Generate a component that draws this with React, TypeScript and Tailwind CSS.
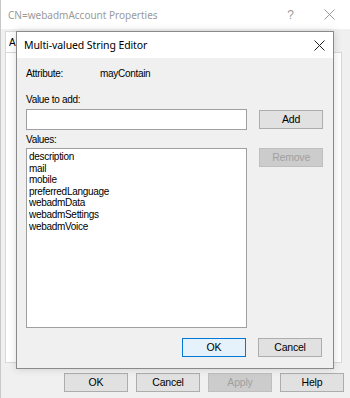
import React from "react";

const values = [
  "description",
  "mail",
  "mobile",
  "preferredLanguage",
  "webadmData",
  "webadmSettings",
  "webadmVoice",
];

const CloseGlyph = ({ size = 11, color = "#333" }: { size?: number; color?: string }) => (
  <svg width={size} height={size} viewBox="0 0 11 11">
    <path d="M0.5 0.5 L10.5 10.5 M10.5 0.5 L0.5 10.5" stroke={color} strokeWidth="1" fill="none" />
  </svg>
);

const WinButton = ({
  label,
  variant = "normal",
}: {
  label: string;
  variant?: "normal" | "default" | "disabled";
}) => {
  const styles =
    variant === "default"
      ? "border-[#0078d7] bg-[#e5f1fb] text-black"
      : variant === "disabled"
      ? "border-[#bfbfbf] bg-[#cccccc] text-[#a0a0a0]"
      : "border-[#adadad] bg-[#e1e1e1] text-black";
  return (
    <div
      className={`flex h-[19px] w-[64px] items-center justify-center border text-[10.5px] leading-[13px] tracking-[-0.2px] ${styles}`}
    >
      {label}
    </div>
  );
};

export default function App() {
  return (
    <div
      className="relative h-[398px] w-[350px] overflow-hidden border-l border-[#c8c8c8] bg-[#f0f0f0] text-black"
      style={{ fontFamily: '"Liberation Sans", Arial, sans-serif' }}
    >
      {/* Parent window */}
      <div className="flex h-[29px] items-center bg-white pl-[7px] pr-[15px]">
        <span
          className="text-[10px] leading-[14px] text-[#9a9a9a]"
          style={{ fontFamily: '"Noto Sans", sans-serif' }}
        >
          CN=webadmAccount Properties
        </span>
        <span className="ml-auto mr-[30px] text-[12px] leading-[14px] text-[#9a9a9a]">?</span>
        <CloseGlyph size={11} color="#9a9a9a" />
      </div>
      <div className="flex h-[23px] items-end pl-[4px]">
        <div className="flex h-[21px] w-[24px] items-center border border-b-0 border-[#d9d9d9] bg-white pl-[3px] text-[10px] leading-[13px]">
          A
        </div>
      </div>
      <div className="ml-[4px] mr-[8px] h-[311px] border border-[#d9d9d9] bg-white" />
      <div className="mt-[10px] flex justify-end gap-[8px] pr-[6px]">
        <WinButton label="OK" />
        <WinButton label="Cancel" />
        <WinButton label="Apply" variant="disabled" />
        <WinButton label="Help" />
      </div>

      {/* Multi-valued String Editor dialog */}
      <div className="absolute left-[15px] top-[31px] flex h-[338px] w-[318px] flex-col border border-[#8a8a8a] bg-[#f0f0f0] shadow-[0_0_8px_rgba(0,0,0,0.15)]">
        <div className="flex h-[26px] shrink-0 items-center bg-white pl-[7px] pr-[8px]">
          <span
            className="text-[10.5px] leading-[14px] tracking-[-0.1px] text-black"
            style={{ fontFamily: '"Noto Sans", sans-serif' }}
          >
            Multi-valued String Editor
          </span>
          <span className="ml-auto">
            <CloseGlyph size={11} color="#222" />
          </span>
        </div>
        <div className="flex flex-1 flex-col pl-[9px] pr-[10px] text-[10px] leading-[13px] tracking-[-0.3px]">
          <div className="mt-[9px] flex">
            <span className="w-[74px]">Attribute:</span>
            <span>mayContain</span>
          </div>
          <div className="mt-[13px]">Value to add:</div>
          <div className="mt-[3px] flex gap-[12px]">
            <div className="h-[21px] w-[222px] border border-[#a0a0a0] bg-white" />
            <div className="mt-[1px]">
              <WinButton label="Add" />
            </div>
          </div>
          <div className="mt-[3px]">Values:</div>
          <div className="mt-[2px] flex gap-[12px]">
            <div className="flex h-[180px] w-[222px] flex-col border border-[#a0a0a0] bg-white pl-[2px] pt-[2px]">
              {values.map((v) => (
                <div key={v} className="h-[11.6px] leading-[11.6px]">
                  {v}
                </div>
              ))}
            </div>
            <WinButton label="Remove" variant="disabled" />
          </div>
          <div className="mt-[10px] flex justify-end gap-[12px] pr-[1px]">
            <WinButton label="OK" variant="default" />
            <WinButton label="Cancel" />
          </div>
        </div>
      </div>
    </div>
  );
}
